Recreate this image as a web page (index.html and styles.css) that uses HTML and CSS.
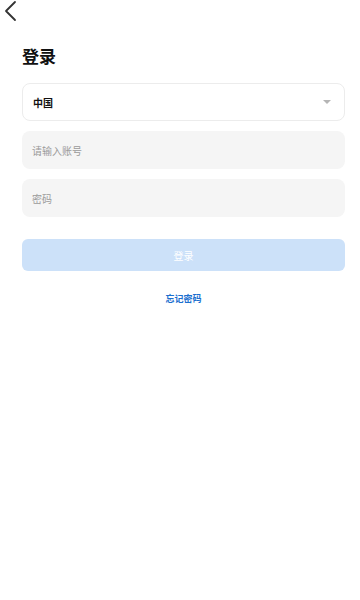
FILE: index.html
```html
<!DOCTYPE html>
<html lang="zh-CN">
<head>
<meta charset="UTF-8" />
<meta name="viewport" content="width=device-width, initial-scale=1.0"/>
<title>登录</title>
<link rel="stylesheet" href="styles.css">
</head>
<body>
<div class="topbar">
  <svg class="back" width="14" height="22" viewBox="0 0 14 22">
    <polyline points="11,2 2,11 11,20" fill="none" stroke="#333" stroke-width="1.8" stroke-linecap="round" stroke-linejoin="round"/>
  </svg>
</div>
<div class="page">
  <h1>登录</h1>
  <div class="select">
    <span>中国</span>
    <span class="arrow"></span>
  </div>
  <div class="field">请输入账号</div>
  <div class="field">密码</div>
  <button class="submit">登录</button>
  <div class="forgot">忘记密码</div>
</div>
</body>
</html>
```

FILE: styles.css
```css
body {
  font-family: "Noto Sans CJK SC", "Noto Sans", sans-serif;
  background: #fff;
  margin: 0;
  padding: 0;
  color: #111;
}

.topbar {
  height: 24px;
  padding-left: 4px;
}

.back {
  display: block;
}

.page {
  padding: 0 15px 0 22px;
  display: flex;
  flex-direction: column;
}

h1 {
  margin: 19px 0 14px;
  font-size: 17px;
  line-height: 26px;
  font-weight: 700;
}

.select {
  height: 36px;
  border: 1px solid #ececec;
  border-radius: 8px;
  display: flex;
  align-items: center;
  justify-content: space-between;
  padding: 0 13px 0 10px;
  font-size: 10px;
  font-weight: 700;
}

.arrow {
  width: 0;
  height: 0;
  border-left: 4px solid transparent;
  border-right: 4px solid transparent;
  border-top: 4px solid #b5b5b5;
}

.field {
  margin-top: 10px;
  height: 38px;
  background: #f5f5f5;
  border-radius: 8px;
  display: flex;
  align-items: center;
  padding-left: 10px;
  font-size: 10px;
  color: #9a9a9a;
}

.submit {
  margin-top: 22px;
  height: 32px;
  border: none;
  border-radius: 6px;
  background: #cce1f9;
  color: #fff;
  font-family: inherit;
  font-size: 10px;
}

.forgot {
  margin-top: 21px;
  text-align: center;
  font-size: 9px;
  font-weight: 700;
  color: #1b6fcf;
}
```
